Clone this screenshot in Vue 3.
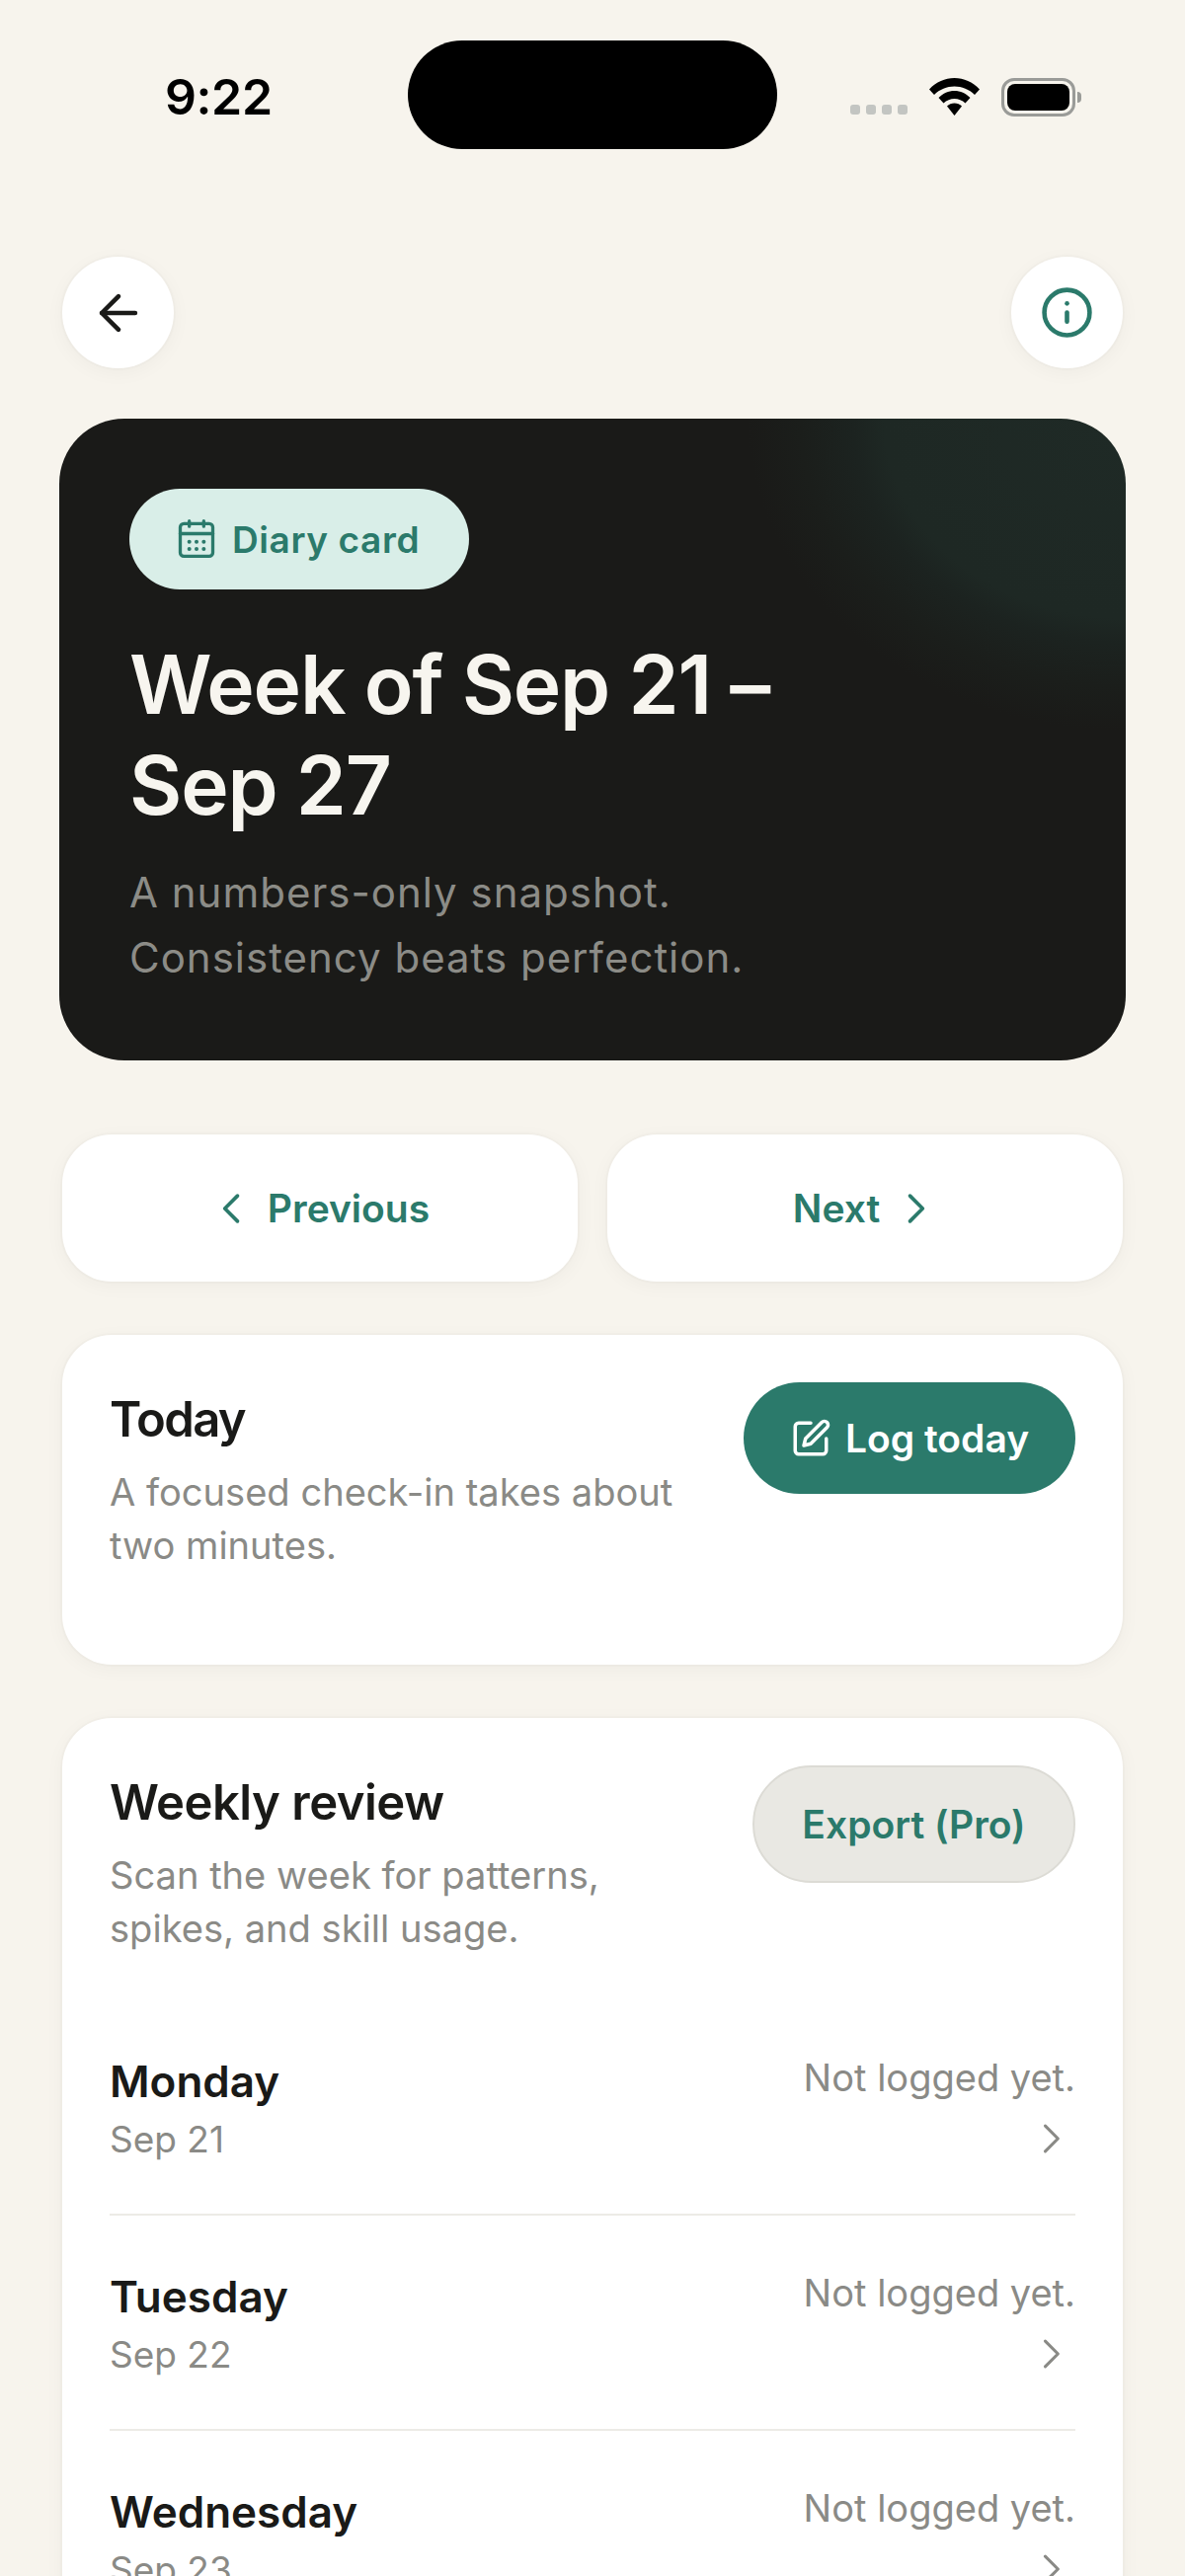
<script setup>
const days = [
  { name: 'Monday', date: 'Sep 21' },
  { name: 'Tuesday', date: 'Sep 22' },
  { name: 'Wednesday', date: 'Sep 23' }
]
</script>

<template>
  <div class="page">
    <!-- Status bar -->
    <header class="status">
      <span class="clock">9:22</span>
      <div class="island"></div>
      <div class="status-icons">
        <div class="signal"><i></i><i></i><i></i><i></i></div>
        <svg class="wifi" viewBox="0 0 51 38" width="51" height="38">
          <path d="M25.5 0C35 0 44 4 51 11.5L46 17C40.5 11.500 33 8.500 25.500 8.500S10.500 11.500 5 17L0 11.500C7 4 16 0 25.500 0Z" fill="#000" />
          <path d="M25.500 13C31.500 13 37 15.500 41.500 20L36.500 25.500C33.500 22.500 29.500 21 25.500 21S17.500 22.500 14.500 25.500L9.500 20C14 15.500 19.500 13 25.500 13Z" fill="#000" />
          <path d="M25.500 25.500C28.500 25.500 31 26.500 33 28.500L25.500 38L18 28.500C20 26.500 22.500 25.500 25.500 25.500Z" fill="#000" />
        </svg>
        <div class="battery">
          <div class="battery-body"><div class="battery-fill"></div></div>
          <div class="battery-cap"></div>
        </div>
      </div>
    </header>

    <!-- Top actions -->
    <div class="top-bar">
      <button class="round-btn">
        <svg viewBox="0 0 24 24" width="58" height="58" fill="none" stroke="#1a1a18" stroke-width="1.900" stroke-linecap="round" stroke-linejoin="round">
          <path d="M12 5l-7 7 7 7" />
          <path d="M5 12h14" />
        </svg>
      </button>
      <button class="round-btn">
        <svg viewBox="0 0 24 24" width="55" height="55" fill="none" stroke="#2b7a6b" stroke-width="2" stroke-linecap="round" stroke-linejoin="round">
          <circle cx="12" cy="12" r="10" />
          <path d="M12 16v-4" />
          <path d="M12 8h.01" />
        </svg>
      </button>
    </div>

    <!-- Week header -->
    <section class="hero">
      <div class="pill">
        <svg viewBox="0 0 24 24" width="44" height="44" fill="none" stroke="#2b7a6b" stroke-width="1.800" stroke-linecap="round" stroke-linejoin="round">
          <path d="M8 2v3M16 2v3" />
          <rect x="3" y="3.500" width="18" height="18" rx="2" />
          <path d="M3 9h18" />
          <path d="M8 13.500h.01M12 13.500h.01M16 13.500h.01M8 17.500h.01M12 17.500h.01M16 17.500h.01" stroke-width="2.200" />
        </svg>
        <span>Diary card</span>
      </div>
      <h1>Week of Sep 21 –<br />Sep 27</h1>
      <p>A numbers-only snapshot.<br />Consistency beats perfection.</p>
    </section>

    <!-- Week navigation -->
    <nav class="week-nav">
      <button class="nav-btn">
        <svg viewBox="0 0 24 24" width="44" height="44" fill="none" stroke="#2b7a6b" stroke-width="2" stroke-linecap="round" stroke-linejoin="round"><path d="M15 5l-7 7 7 7" /></svg>
        <span>Previous</span>
      </button>
      <button class="nav-btn">
        <span>Next</span>
        <svg viewBox="0 0 24 24" width="44" height="44" fill="none" stroke="#2b7a6b" stroke-width="2" stroke-linecap="round" stroke-linejoin="round"><path d="M9 5l7 7-7 7" /></svg>
      </button>
    </nav>

    <!-- Today card -->
    <section class="card today">
      <div class="card-text">
        <h2>Today</h2>
        <p>A focused check-in takes about two minutes.</p>
      </div>
      <button class="log-btn">
        <svg viewBox="0 0 24 24" width="42" height="42" fill="none" stroke="#fff" stroke-width="2" stroke-linecap="round" stroke-linejoin="round">
          <path d="M12 3H5a2 2 0 0 0-2 2v14a2 2 0 0 0 2 2h14a2 2 0 0 0 2-2v-7" />
          <path d="M18.400 2.600a2.100 2.100 0 1 1 3 3L12 15l-4 1 1-4z" />
        </svg>
        <span>Log today</span>
      </button>
    </section>

    <!-- Weekly review card -->
    <section class="card weekly">
      <div class="weekly-head">
        <div class="card-text">
          <h2>Weekly review</h2>
          <p>Scan the week for patterns, spikes, and skill usage.</p>
        </div>
        <button class="export-btn">Export (Pro)</button>
      </div>
      <div v-for="day in days" :key="day.name" class="day-row">
        <div>
          <div class="day-name">{{ day.name }}</div>
          <div class="day-date">{{ day.date }}</div>
        </div>
        <div class="day-state">
          <div class="state-text">Not logged yet.</div>
          <svg viewBox="0 0 24 24" width="44" height="44" fill="none" stroke="#8a8a86" stroke-width="1.700" stroke-linecap="round" stroke-linejoin="round"><path d="M9 5l7 7-7 7" /></svg>
        </div>
      </div>
    </section>
  </div>
</template>

<style>
html,
body {
  margin: 0;
  background: #f7f4ed;
}
</style>

<style scoped>
.page {
  height: 2609px;
  overflow: hidden;
  padding: 0 60px;
  box-sizing: border-box;
  background: #f7f4ed;
  font-family: Inter, "Liberation Sans", sans-serif;
  color: #1a1a18;
}

button {
  font-family: inherit;
  border: none;
  cursor: pointer;
}

h1, h2, p {
  margin: 0;
}

/* Status bar */
.status {
  display: grid;
  grid-template-columns: 1fr 374px 1fr;
  align-items: center;
  padding-top: 41px;
  margin-bottom: 109px;
}
.clock {
  padding-left: 107px;
  font-size: 50px;
  font-weight: 600;
  letter-spacing: -0.4px;
  color: #000;
  margin-top: 4px;
}
.island {
  height: 110px;
  border-radius: 55px;
  background: #000;
}
.status-icons {
  display: flex;
  align-items: center;
  justify-content: flex-end;
  margin-top: 4px;
  margin-right: 45px;
}
.signal {
  display: flex;
  gap: 6px;
  margin-top: 26px;
  margin-right: 22px;
}
.signal i {
  width: 10px;
  height: 10px;
  border-radius: 3px;
  background: #c3c5c2;
}
.wifi {
  margin-right: 22px;
}
.battery {
  display: flex;
  align-items: center;
  gap: 2px;
}
.battery-body {
  width: 75px;
  height: 39px;
  box-sizing: border-box;
  border: 3px solid #9a9b98;
  border-radius: 13px;
  padding: 3px;
}
.battery-fill {
  height: 100%;
  border-radius: 8px;
  background: #000;
}
.battery-cap {
  width: 4px;
  height: 11px;
  border-radius: 0 4px 4px 0;
  background: #9a9b98;
}

/* Top actions */
.top-bar {
  display: flex;
  justify-content: space-between;
  margin: 0 3px 51px;
}
.round-btn {
  width: 113px;
  height: 113px;
  padding: 0;
  border-radius: 50%;
  background: #fff;
  display: flex;
  align-items: center;
  justify-content: center;
  box-shadow: 0 0 0 2px rgba(26, 26, 24, 0.015), 0 4px 20px rgba(26, 26, 24, 0.04);
}

/* Week header */
.hero {
  height: 650px;
  box-sizing: border-box;
  padding: 71px 71px 0;
  border-radius: 66px;
  background:
    radial-gradient(ellipse 383px 316px at 100% 0, #1f2a26 0, #1e2824 64%, #1c2320 72%, #1b1e1b 86%, #1a1a18 100%),
    #1a1a18;
}
.pill {
  display: inline-flex;
  align-items: center;
  gap: 14px;
  height: 102px;
  padding: 0 50px 0 46px;
  border-radius: 51px;
  background: #d9eee8;
  color: #2b7a6b;
  font-size: 37px;
  font-weight: 600;
  letter-spacing: 0.6px;
}
.hero h1 {
  margin-top: 46px;
  font-size: 82px;
  line-height: 102px;
  font-weight: 600;
  letter-spacing: -1.2px;
  color: #f7f5ef;
}
.hero p {
  margin-top: 24px;
  font-size: 42px;
  line-height: 66px;
  letter-spacing: 1px;
  color: #8c8c87;
}

/* Week navigation */
.week-nav {
  display: grid;
  grid-template-columns: 1fr 1fr;
  gap: 30px;
  margin: 75px 3px 0;
}
.nav-btn {
  height: 149px;
  border-radius: 50px;
  background: #fff;
  display: flex;
  align-items: center;
  justify-content: center;
  gap: 14px;
  color: #2b7a6b;
  font-size: 39px;
  font-weight: 600;
  box-shadow: 0 0 0 2px rgba(26, 26, 24, 0.015), 0 4px 20px rgba(26, 26, 24, 0.04);
}

/* Cards */
.card {
  margin: 54px 3px 0;
  padding: 48px;
  border-radius: 50px;
  background: #fff;
  box-shadow: 0 0 0 2px rgba(26, 26, 24, 0.015), 0 4px 20px rgba(26, 26, 24, 0.04);
}
.card-text h2 {
  font-size: 49px;
  font-weight: 600;
  letter-spacing: -0.5px;
  line-height: 60px;
}
.today h2 {
  letter-spacing: -1.6px;
}
.card-text p {
  margin-top: 16px;
  font-size: 38.100px;
  line-height: 54px;
  color: #8a8a86;
}
.today {
  display: flex;
  justify-content: space-between;
  align-items: flex-start;
  gap: 30px;
  height: 334px;
  box-sizing: border-box;
}
.today .card-text {
  padding-top: 8px;
}
.log-btn {
  flex-shrink: 0;
  width: 336px;
  height: 113px;
  border-radius: 57px;
  background: #2b7a6b;
  color: #fff;
  display: flex;
  align-items: center;
  justify-content: center;
  gap: 14px;
  font-size: 39px;
  font-weight: 600;
}
.weekly-head {
  display: flex;
  justify-content: space-between;
  align-items: flex-start;
  gap: 60px;
  margin-bottom: 46px;
}
.weekly-head .card-text {
  padding-top: 8px;
}
.export-btn {
  flex-shrink: 0;
  width: 327px;
  height: 119px;
  border-radius: 60px;
  background: #e9e8e3;
  border: 2px solid #dcdbd5;
  color: #2b7a6b;
  font-size: 39px;
  font-weight: 600;
}

/* Day rows */
.day-row {
  display: flex;
  justify-content: space-between;
  height: 218px;
  box-sizing: border-box;
  padding-top: 52px;
  border-bottom: 2px solid #ecebe6;
}
.day-name {
  font-size: 44px;
  font-weight: 600;
  line-height: 60px;
}
.day-date {
  margin-top: 3px;
  font-size: 37px;
  line-height: 52px;
  color: #8a8a86;
}
.state-text {
  font-size: 38px;
  line-height: 52px;
  color: #8a8a86;
}
.day-state {
  display: flex;
  flex-direction: column;
  align-items: flex-end;
}
.day-state svg {
  margin-top: 14px;
  margin-right: 3px;
}
</style>
